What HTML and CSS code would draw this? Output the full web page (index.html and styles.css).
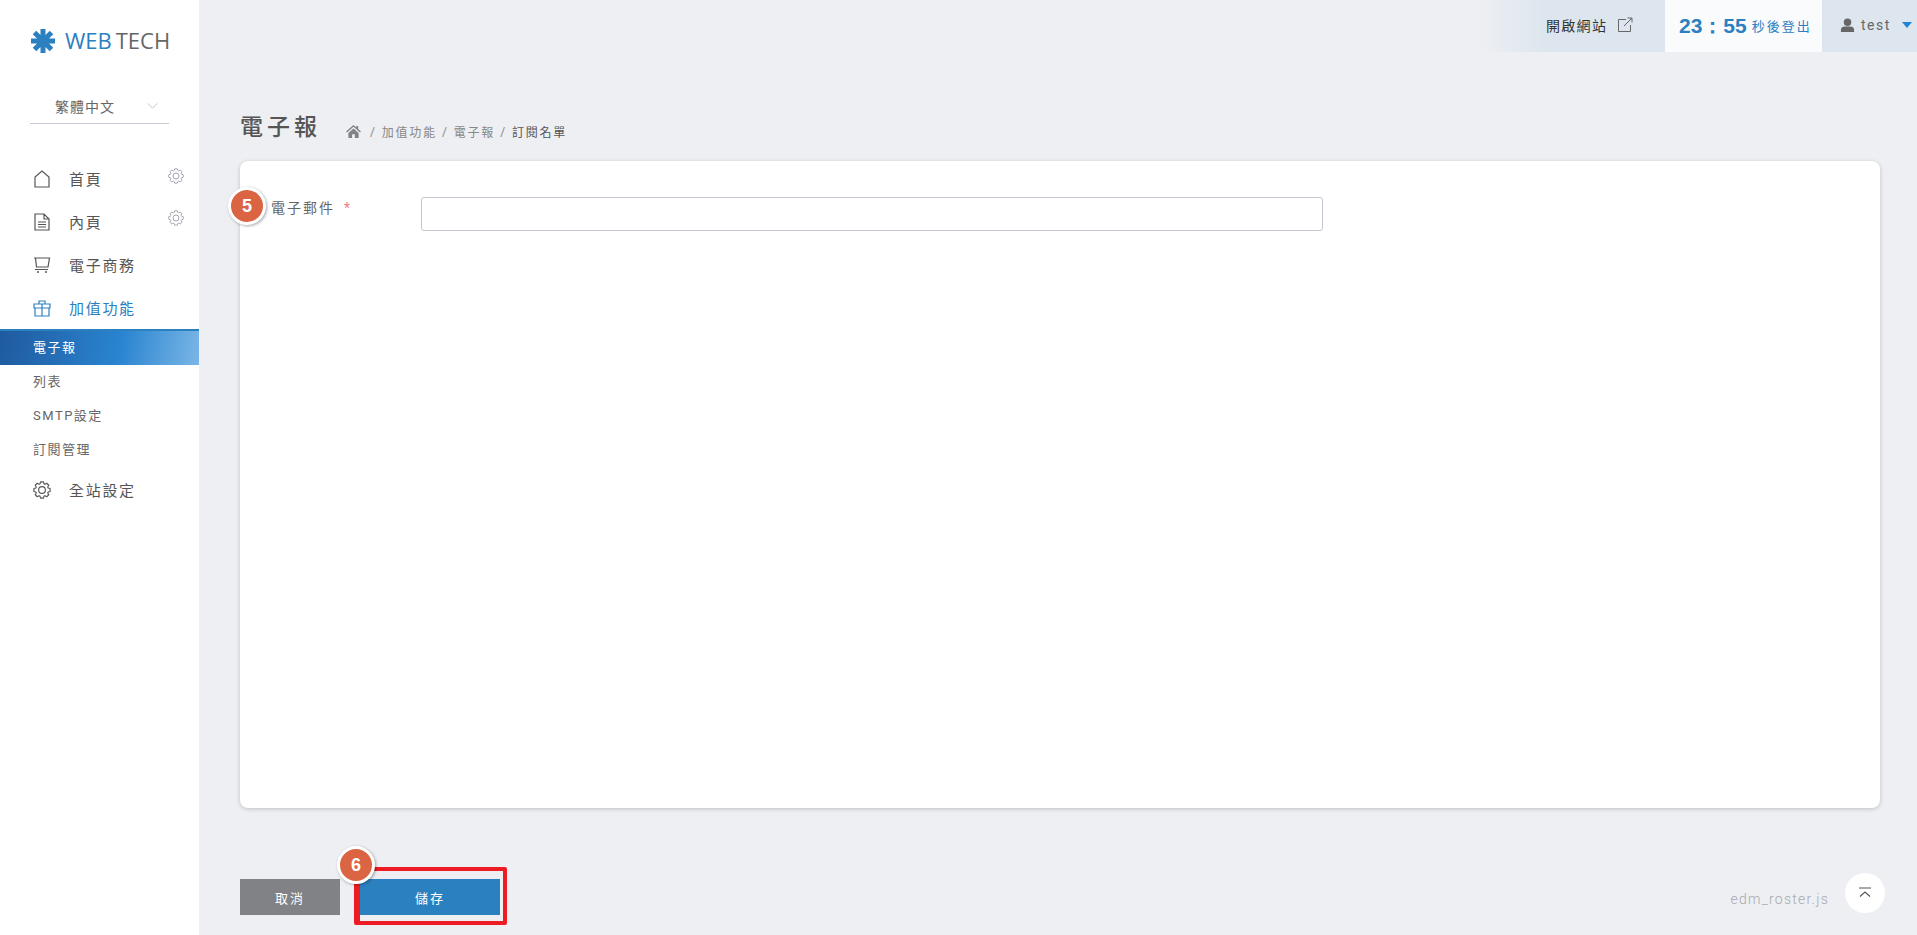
FILE: index.html
```html
<!DOCTYPE html>
<html lang="zh-Hant">
<head>
    <meta charset="UTF-8">
    <title>電子報 - 訂閱名單</title>
    <link rel="stylesheet" href="styles.css">
</head>
<body>
<aside class="sidebar">
    <div class="logo">
        <svg class="logo-mark" viewBox="0 0 26 26" width="26" height="26"><g stroke="#2b80bf" stroke-width="5"><path d="M13 1v24M1 13h24M4.500 4.500l17 17M21.500 4.500l-17 17"/></g></svg>
        <span class="logo-web">WEB</span><span class="logo-tech">TECH</span>
    </div>
    <div class="lang">
        <span>繁體中文</span>
        <svg viewBox="0 0 12 7" width="11" height="6"><path d="M.5.5 6 6 11.500.5" fill="none" stroke="#b9bcc6"/></svg>
    </div>
    <nav class="menu">
        <a class="menu-item">
            <svg class="menu-icon" viewBox="0 0 18 18"><path d="M2 17V7l7-6 7 6v10z" fill="none" stroke="currentColor" stroke-width="1.200"/></svg>
            <span>首頁</span>
            <svg class="cog" viewBox="0 0 24 24"><use href="#gear"/></svg>
        </a>
        <a class="menu-item">
            <svg class="menu-icon" viewBox="0 0 18 18"><path d="M2 1h9l5 5v11H2zM11 1v5h5M5 9h8M5 11.500h8M5 14h8" fill="none" stroke="currentColor" stroke-width="1.200"/></svg>
            <span>內頁</span>
            <svg class="cog" viewBox="0 0 24 24"><use href="#gear"/></svg>
        </a>
        <a class="menu-item">
            <svg class="menu-icon" viewBox="0 0 18 18"><path d="M1 2h15.500l-1.500 9H3.500L2.500 2M2 13.500h13" fill="none" stroke="currentColor" stroke-width="1.200"/><path d="M4 16h2M12 16h2" stroke="currentColor" stroke-width="1.500"/></svg>
            <span>電子商務</span>
        </a>
        <a class="menu-item is-open">
            <svg class="menu-icon" viewBox="0 0 18 18"><path d="M1 5h16v4H1zM2 9h14v8H2zM9 5v12M6 5V2h6v3" fill="none" stroke="currentColor" stroke-width="1.200"/></svg>
            <span>加值功能</span>
        </a>
        <div class="submenu">
            <a class="sub-item is-active">電子報</a>
            <a class="sub-item">列表</a>
            <a class="sub-item">SMTP設定</a>
            <a class="sub-item">訂閱管理</a>
        </div>
        <a class="menu-item">
            <svg class="menu-icon" viewBox="0 0 24 24"><use href="#gear"/></svg>
            <span>全站設定</span>
        </a>
    </nav>
</aside>

<div class="main">
    <header class="topbar">
        <a class="site-link">
            <span>開啟網站</span>
            <svg viewBox="0 0 16 16" width="16" height="16"><path d="M9 2.500H1.500v12h12V8M7 9l8-8M10.500 1H15v4.500" fill="none" stroke="#666" stroke-width="1"/></svg>
        </a>
        <div class="timer"><b>23：55</b><span>秒後登出</span></div>
        <div class="user">
            <svg viewBox="0 0 16 16" width="15" height="15"><circle cx="8" cy="4.500" r="4" fill="#666"/><path d="M1 15v-2.500C1 10 3 9 5 9h6c2 0 4 1 4 3.500V15z" fill="#666"/></svg>
            <span>test</span>
            <i class="caret"></i>
        </div>
    </header>

    <div class="content">
        <div class="page-head">
            <h1>電子報</h1>
            <div class="crumbs">
                <svg viewBox="0 0 16 14" width="15" height="13"><path d="M8 0 0 7l1 1 7-6 7 6 1-1-3-2.600V1h-2v1.700zM2.500 8.500V14h4v-4h3v4h4V8.500L8 3.700z" fill="#808285"/></svg>
                <span>/</span><a>加值功能</a><span>/</span><a>電子報</a><span>/</span><b>訂閱名單</b>
            </div>
        </div>

        <section class="card">
            <div class="field">
                <label>電子郵件<em>*</em></label>
                <input type="text">
            </div>
            <span class="step step-5">5</span>
        </section>

        <footer class="actions">
            <button class="btn btn-cancel">取消</button>
            <button class="btn btn-save">儲存</button>
            <span class="red-box"></span>
            <span class="step step-6">6</span>
            <span class="file-name">edm_roster.js</span>
            <a class="to-top">
                <svg viewBox="0 0 14 12" width="14" height="12"><path d="M1 1h12" stroke="#555" stroke-width="1"/><path d="M2 9.500 7 5l5 4.500" fill="none" stroke="#555" stroke-width="1.200"/></svg>
            </a>
        </footer>
    </div>
</div>

<svg class="defs" width="0" height="0">
    <symbol id="gear" viewBox="0 0 24 24">
        <path d="M10.090 1.170h3.820l.75 2.650 1.240.52 2.410-1.350 2.700 2.700-1.350 2.410.52 1.240 2.650.75v3.820l-2.650.75-.52 1.240 1.350 2.410-2.700 2.700-2.410-1.350-1.240.52-.75 2.650h-3.820l-.75-2.650-1.240-.52-2.410 1.350-2.700-2.700 1.350-2.410-.52-1.240-2.650-.75v-3.820l2.650-.75.52-1.240-1.350-2.410 2.700-2.700 2.410 1.350 1.240-.52z" fill="none" stroke="currentColor" stroke-width="1.500" stroke-linejoin="round"/>
        <circle cx="12" cy="12" r="4.500" fill="none" stroke="currentColor" stroke-width="1.500"/>
    </symbol>
</svg>
</body>
</html>
```

FILE: styles.css
```css
:root {
    --blue: #2b80bf;
    --text: #555;
    --page-bg: #edeff3;
    --font: Roboto, "Noto Sans CJK TC", sans-serif;
}
* { box-sizing: border-box; }
body { margin: 0; display: flex; height: 935px; overflow: hidden; background: var(--page-bg); color: var(--text); font-family: var(--font); }
.defs { position: absolute; }

.sidebar { width: 199px; flex: none; background: #fff; padding-top: 28px; }
.logo { display: flex; align-items: center; height: 26px; margin-left: 30px; font-family: "Open Sans", sans-serif; font-size: 22px; }
.logo-mark { margin-right: 9px; }
.logo-web { color: var(--blue); margin: 0 4px 2px 0; }
.logo-tech { color: #666; margin-bottom: 2px; }
.lang { display: flex; align-items: center; justify-content: space-between; width: 139px; height: 31px; margin: 39px 0 0 30px; padding: 0 11px 4px 25px; border-bottom: 1px solid #c9cad4; font-size: 14px; letter-spacing: 1px; color: #666; }

.menu { margin-top: 33px; }
.menu-item { display: flex; align-items: center; height: 43px; padding-left: 33px; position: relative; font-size: 15px; letter-spacing: 1.700px; color: #555; }
.menu-icon { width: 18px; height: 18px; margin-right: 18px; flex: none; }
.cog { position: absolute; right: 15px; top: 11px; width: 16px; height: 16px; color: #a5a8b0; }
.menu-item + .menu-item .cog { top: 10px; }
.menu-item.is-open { color: var(--blue); }
.submenu { border-top: 2px solid var(--blue); margin-bottom: 1px; }
.sub-item { display: block; height: 34px; padding-left: 33px; font-size: 13px; line-height: 34px; letter-spacing: 1.500px; color: #666; }
.sub-item.is-active { background: linear-gradient(100deg, #1f5a9e 0%, #2a84d0 60%, #7ab6e6 100%); color: #fff; }

.main { flex: 1; display: flex; flex-direction: column; min-width: 0; }
.topbar { display: flex; justify-content: flex-end; height: 52px; flex: none; }
.site-link { display: flex; align-items: center; gap: 10px; width: 185px; padding: 0 0 2px 66px; background: linear-gradient(90deg, var(--page-bg) 0%, #dde6ee 35%); font-size: 14px; letter-spacing: 1.300px; color: #333; }
.timer { display: flex; align-items: center; gap: 5px; width: 157px; padding: 0 0 1px 14px; background: #fafbfd; color: var(--blue); font-size: 13px; letter-spacing: 2px; }
.timer b { font-size: 21px; letter-spacing: 0; font-family: "Liberation Sans", sans-serif; }
.user { display: flex; align-items: center; width: 95px; padding: 0 0 2px 18px; background: #dde6ee; font-size: 14px; letter-spacing: 1.500px; color: #666; }
.user span { margin-left: 6px; }
.caret { margin-left: 11px; border: 5px solid transparent; border-top: 6px solid #2183d2; border-bottom: 0; }

.content { flex: 1; display: flex; flex-direction: column; padding: 0 37px 0 41px; }
.page-head { display: flex; align-items: flex-end; height: 109px; padding-bottom: 17px; }
.page-head h1 { margin: 0 25px 0 0; font-size: 23px; font-weight: 500; line-height: 32px; letter-spacing: 4px; color: #555; }
.crumbs { display: flex; align-items: center; gap: 5px; font-size: 12px; letter-spacing: 1.800px; color: #888; padding-bottom: 4px; }
.crumbs svg { margin-right: 4px; }
.crumbs b { font-weight: 400; color: #555; }

.card { position: relative; height: 647px; background: #fff; border-radius: 8px; box-shadow: 0 1px 4px rgba(0, 0, 0, .2); padding-top: 36px; }
.field { display: flex; align-items: flex-start; }
.field label { width: 181px; padding-left: 31px; font-size: 14px; line-height: 22px; letter-spacing: 2px; color: #666; }
.field em { margin-left: 9px; font-style: normal; color: #f08080; }
.field input { width: 902px; height: 34px; border: 1px solid #c4c5d0; border-radius: 3px; background: #fff; }

.step { position: absolute; display: flex; align-items: center; justify-content: center; width: 38px; height: 38px; border: 3px solid #fff; border-radius: 50%; background: #db6443; box-shadow: 1px 1px 3px rgba(0, 0, 0, .35); color: #fff; font: 700 18px "Liberation Sans", sans-serif; }
.step-5 { left: -12px; top: 26px; }
.step-6 { left: 97px; top: 38px; }

.actions { position: relative; display: flex; align-items: flex-start; gap: 20px; flex: 1; padding-top: 71px; }
.btn { height: 36px; border: 0; padding: 0; color: #fff; font-family: var(--font); font-size: 13px; letter-spacing: 2px; }
.btn-cancel { width: 100px; background: #808285; }
.btn-save { width: 140px; background: var(--blue); }
.red-box { position: absolute; left: 114px; top: 59px; width: 153px; height: 58px; border: 4px solid #ed1c24; border-left-width: 6px; border-radius: 2px; }
.file-name { margin: 10px -4px 0 auto; font-size: 14px; line-height: 20px; font-weight: 300; letter-spacing: 1.250px; color: #a9aab0; }
.to-top { display: flex; align-items: center; justify-content: center; width: 40px; height: 40px; border-radius: 50%; background: #fff; margin: -6px -5px 0 0; }
```
